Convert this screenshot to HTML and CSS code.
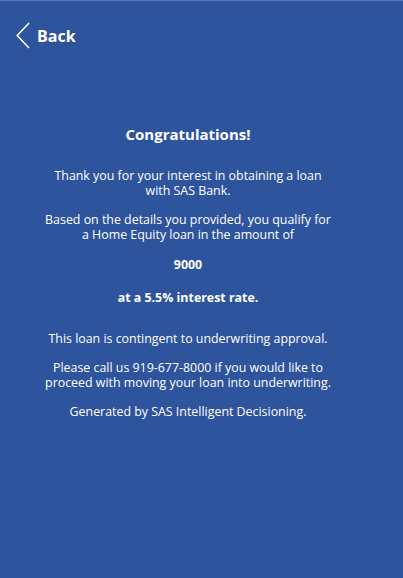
FILE: index.html
```html
<!DOCTYPE html>
<html>
<head>
<meta charset="utf-8">
<link rel="stylesheet" href="styles.css">
</head>
<body>
<div class="screen">
  <header class="topbar">
    <a class="back" href="#">
      <svg class="chev" width="14" height="27" viewBox="0 0 14 27"><path d="M13 1 L1.2 13.5 L13 26" fill="none" stroke="#ffffff" stroke-width="1.5"/></svg>
      <span>Back</span>
    </a>
  </header>
  <main class="content">
    <h1 class="title">Congratulations!</h1>
    <p class="first">Thank you for your interest in obtaining a loan<br>with SAS Bank.</p>
    <p>Based on the details you provided, you qualify for<br>a Home Equity loan in the amount of</p>
    <p class="strong amt">9000</p>
    <p class="strong rate">at a 5.5% interest rate.</p>
    <p class="gap">This loan is contingent to underwriting approval.</p>
    <p>Please call us 919-677-8000 if you would like to<br>proceed with moving your loan into underwriting.</p>
    <p>Generated by SAS Intelligent Decisioning.</p>
  </main>
</div>
</body>
</html>
```
FILE: styles.css
```css
html, body {
  margin: 0;
  padding: 0;
  height: 100%;
}
body {
  background: #2e549e;
  font-family: "Open Sans", "Noto Sans", sans-serif;
  color: #ffffff;
}
.screen {
  min-height: 578px;
  border-top: 1px solid #5b79b5;
  box-sizing: border-box;
}
.topbar {
  height: 70px;
  display: flex;
  align-items: flex-start;
  padding: 21px 0 0 16px;
  box-sizing: border-box;
}
.back {
  display: flex;
  align-items: center;
  gap: 7px;
  color: #ffffff;
  text-decoration: none;
  font-weight: 700;
  font-size: 16px;
}
.content {
  width: 320px;
  margin-left: 28px;
  text-align: center;
  font-size: 12.4px;
  line-height: 15px;
}
.title {
  margin: 53px 0 0;
  font-size: 15px;
  font-weight: 700;
  line-height: 20px;
}
.content p {
  margin: 14px 0 0;
}
.content p.first {
  margin-top: 24px;
}
.strong {
  font-weight: 700;
}
.content p.amt {
  margin-top: 15px;
}
.content p.rate {
  margin-top: 18px;
}
.content p.gap {
  margin-top: 26px;
}
```
